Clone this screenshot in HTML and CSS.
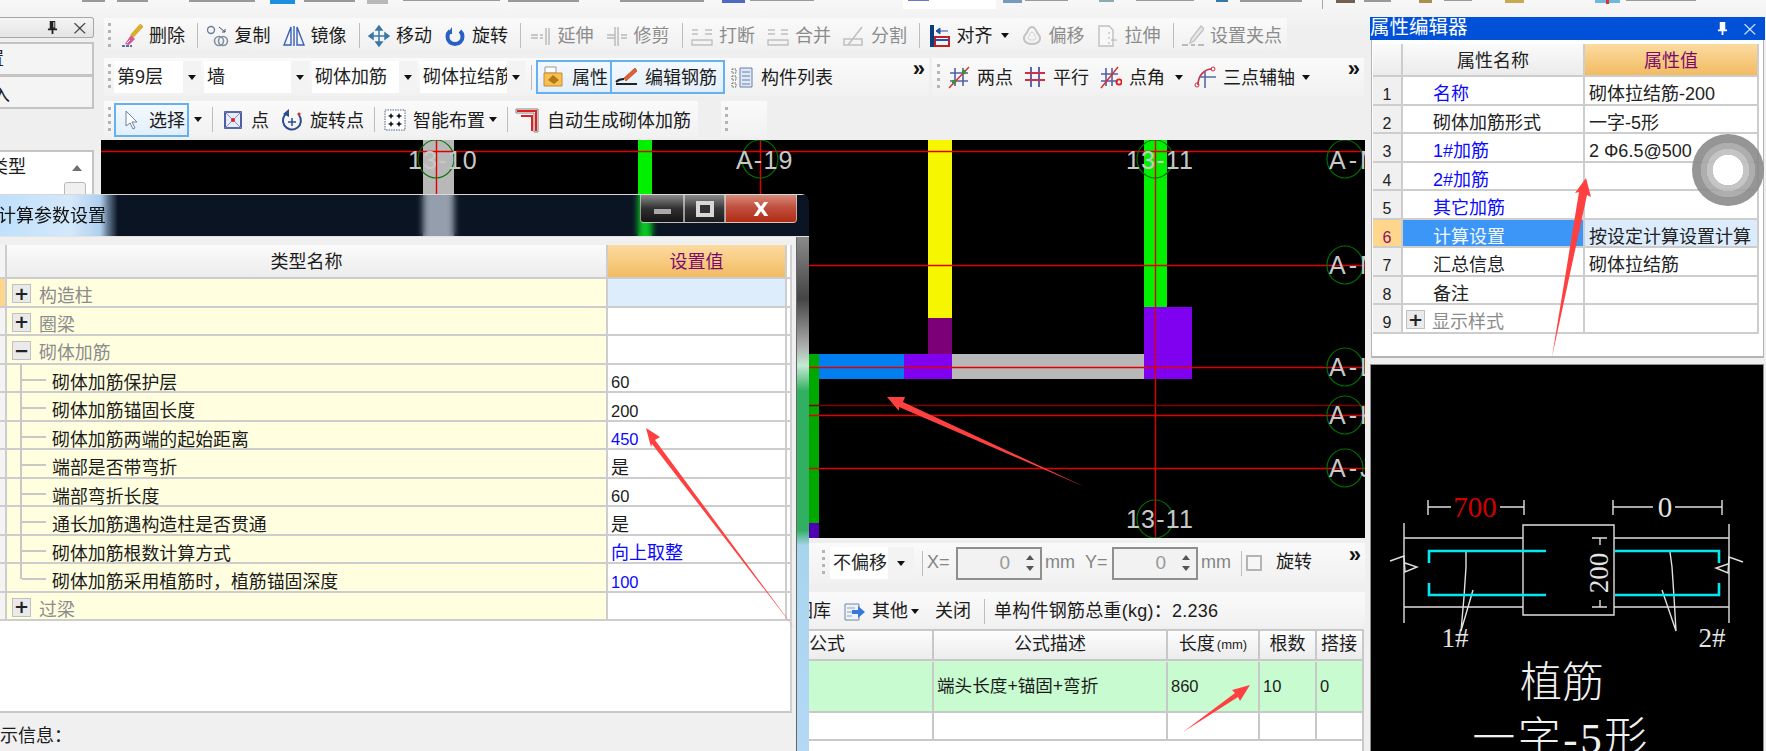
FILE: index.html
```html
<!DOCTYPE html>
<html lang="zh-CN">
<head>
<meta charset="utf-8">
<title>砌体加筋</title>
<link rel="stylesheet" href="styles.css">
</head>
<body>
<div class="app">
  <svg class="topstrip" viewBox="0 0 1766 17" aria-hidden="true">
    <g class="frag">
      <rect x="82" y="0" width="23" height="2"/><rect x="117" y="0" width="31" height="2"/><rect x="189" y="0" width="66" height="2"/>
      <rect x="304" y="0" width="51" height="2"/><rect x="403" y="0" width="97" height="1"/><rect x="508" y="0" width="71" height="2"/>
      <rect x="620" y="0" width="84" height="2"/><rect x="750" y="0" width="50" height="1"/><rect x="800" y="0" width="14" height="1"/>
      <rect x="1025" y="0" width="43" height="1"/><rect x="1136" y="0" width="58" height="1"/><rect x="1240" y="0" width="62" height="2"/>
      <rect x="1364" y="0" width="27" height="2"/><rect x="1444" y="0" width="28" height="1"/><rect x="1626" y="0" width="70" height="1"/>
    </g>
    <rect x="270" y="0" width="25" height="4" fill="#1c8fe0"/>
    <rect x="367" y="0" width="21" height="4" fill="#b8b8b8"/>
    <rect x="722" y="0" width="23" height="3" fill="#5068c0"/>
    <rect x="903" y="0" width="93" height="9" fill="#fff"/>
    <rect x="908" y="0" width="21" height="1" fill="#6878c8"/>
    <rect x="1003" y="0" width="19" height="3" fill="#7898c0"/>
    <rect x="1099" y="0" width="15" height="2" fill="#90a8b0"/>
    <rect x="1216" y="0" width="12" height="2" fill="#3878a8"/>
    <rect x="1322" y="0" width="1" height="9" fill="#a8a8a8"/>
    <rect x="1336" y="0" width="19" height="3" fill="#706050"/>
    <rect x="1419" y="0" width="13" height="3" fill="#a89050"/>
    <rect x="1505" y="0" width="19" height="3" fill="#c8a850"/>
    <rect x="1595" y="0" width="25" height="3" fill="#70b8e0"/>
    <rect x="1606" y="0" width="3" height="4" fill="#e03030"/>
  </svg>

  <div class="workspace">
    <aside class="left">
      <div class="left-head">
        <svg class="pin" viewBox="0 0 12 16"><path d="M3 1h6v8H3zM1 9h10v2H1zM5 11h2v4H5z" fill="#222"/><path d="M7 2h1v6H7z" fill="#fff"/></svg>
        <span class="closex">×</span>
      </div>
      <div class="left-tab left-tab-a"><span class="clip-a">置</span></div>
      <div class="left-tab left-tab-b"><span class="clip-b">入</span></div>
      <div class="left-list">
        <span class="clip-c">类型</span>
        <span class="scroll-up"></span>
        <span class="scroll-thumb"></span>
      </div>
    </aside>

    <main class="center">
      <div class="tb tb1">
        <span class="grip"></span>
        <span class="tool">
          <svg class="ic" viewBox="0 0 22 24"><path d="M1 22h10" stroke="#22408a" stroke-width="1.6" stroke-dasharray="3 1"/><path d="M21 1L11 12" stroke="#d8b030" stroke-width="4.5"/><path d="M10 11l4 4-6 6-4-1z" fill="#d85890"/><path d="M6 19l3-3" stroke="#fff"/></svg>
          <span>删除</span></span>
        <span class="sep"></span>
        <span class="tool">
          <svg class="ic" viewBox="0 0 22 24"><circle cx="4" cy="6" r="3.5" fill="none" stroke="#6880a0" stroke-width="1.4"/><path d="M12 3l6 5m0-3v3h-3" stroke="#405070" fill="none"/><circle cx="12" cy="17" r="4.5" fill="none" stroke="#8090a0" stroke-width="1.6"/><circle cx="16" cy="17" r="4.5" fill="none" stroke="#8090a0" stroke-width="1.6"/></svg>
          <span>复制</span></span>
        <span class="tool">
          <svg class="ic" viewBox="0 0 22 24"><path d="M8 3L1 21h7zM14 3l7 18h-7zM11 2v20" fill="none" stroke="#3860b8" stroke-width="1.4"/></svg>
          <span>镜像</span></span>
        <span class="sep"></span>
        <span class="tool">
          <svg class="ic" viewBox="0 0 22 24"><path d="M11 2v20M2 12h18M11 2L8 6h6zM11 22l-3-4h6zM1 12l4-3v6zM21 12l-4-3v6z" fill="#3a78a8" stroke="#3a78a8" stroke-width="1.5"/></svg>
          <span>移动</span></span>
        <span class="tool">
          <svg class="ic" viewBox="0 0 22 24"><path d="M6 7a7.5 7.5 0 1 0 10 0" fill="none" stroke="#2860c8" stroke-width="4"/><path d="M8 3v7H3z" fill="#2860c8"/></svg>
          <span>旋转</span></span>
        <span class="sep"></span>
        <span class="tool off">
          <svg class="ic" viewBox="0 0 22 24"><path d="M1 11h7M1 14h7M10 11h3M10 14h3M16 4v17M19 4v17" stroke="#b8b8b8" fill="none" stroke-width="1.4"/></svg>
          <span>延伸</span></span>
        <span class="tool off">
          <svg class="ic" viewBox="0 0 22 24"><path d="M1 11h8M1 14h8M15 11h6M15 14h6M9 3v19M12 3v19" stroke="#b8b8b8" fill="none" stroke-width="1.4"/></svg>
          <span>修剪</span></span>
        <span class="sep"></span>
        <span class="tool off">
          <svg class="ic" viewBox="0 0 22 24"><path d="M1 6h6M1 10h6M14 6h7M14 10h7M1 16h20v5H1z" stroke="#c0c0c0" fill="none" stroke-width="1.4"/></svg>
          <span>打断</span></span>
        <span class="tool off">
          <svg class="ic" viewBox="0 0 22 24"><path d="M1 6h7M1 10h7M14 6h7M14 10h7M1 16h20v5H1z" stroke="#c0c0c0" fill="none" stroke-width="1.4"/></svg>
          <span>合并</span></span>
        <span class="tool off">
          <svg class="ic" viewBox="0 0 22 24"><path d="M1 15h18v6H1zM5 21l14-18" stroke="#c0c0c0" fill="none" stroke-width="1.6"/></svg>
          <span>分割</span></span>
        <span class="sep"></span>
        <span class="tool">
          <svg class="ic" viewBox="0 0 22 24"><path d="M3 1v22" stroke="#0c3c80" stroke-width="4"/><path d="M6 13h14v9H6z" fill="none" stroke="#c02020" stroke-width="2"/><path d="M6 16h14" stroke="#2050c0" stroke-width="2"/><path d="M7 7h12M7 7l4-3v6z" stroke="#2050b0" fill="#2050b0"/></svg>
          <span>对齐</span><i class="caret caret-al"></i></span>
        <span class="tool off">
          <svg class="ic" viewBox="0 0 22 24"><path d="M11 3c4 0 4 5 6 7 4 4 2 10-6 10s-10-6-6-10c2-2 2-7 6-7z" fill="none" stroke="#c4c4c4" stroke-width="2"/><path d="M11 8c2 0 2 3 3 4 2 2 1 4-3 4s-5-2-3-4c1-1 1-4 3-4z" fill="none" stroke="#d0d0d0"/></svg>
          <span>偏移</span></span>
        <span class="tool off">
          <svg class="ic" viewBox="0 0 22 24"><path d="M2 2h10l4 4v16H2z" fill="#f8f8f8" stroke="#c0c0c0" stroke-width="1.4"/><path d="M12 8v2m0 3v2m0 3v2M14 16h6" stroke="#b0b0b0"/></svg>
          <span>拉伸</span></span>
        <span class="sep"></span>
        <span class="tool off">
          <svg class="ic" viewBox="0 0 22 24"><path d="M19 2L9 15l-1 4 4-2 10-12z" fill="#e8e8e8" stroke="#c0c0c0" stroke-width="1.3"/><path d="M0 21h6M9 21h4M16 21h6" stroke="#a8a8a8" stroke-width="1.5"/></svg>
          <span>设置夹点</span></span>
      </div>

      <div class="tb-row tb-row2">
        <div class="tb tb2a">
          <span class="grip"></span>
          <div class="combos">
            <span class="combo combo-s"><span class="combo-t">第9层</span><span class="combo-b"><i class="caret"></i></span></span>
            <span class="combo"><span class="combo-t">墙</span><span class="combo-b"><i class="caret"></i></span></span>
            <span class="combo"><span class="combo-t">砌体加筋</span><span class="combo-b"><i class="caret"></i></span></span>
            <span class="combo"><span class="combo-t">砌体拉结筋</span><span class="combo-b"><i class="caret"></i></span></span>
          </div>
          <span class="sep sep-r2"></span>
          <span class="btn btn-attr">
            <svg class="ic" viewBox="0 0 22 24"><path d="M3 2h11v6H3z" fill="#fff" stroke="#999"/><path d="M2 8h18v13H2z" fill="#f8c050" stroke="#c88830"/><path d="M6 15l5-5 6 5-5 4z" fill="#b07818"/></svg>
            <span>属性</span></span>
          <span class="btn btn-edit">
            <svg class="ic" viewBox="0 0 22 24"><path d="M20 3L9 13l2 3L22 6z" fill="#e06030" stroke="#a03818" stroke-width=".6"/><path d="M1 17c3-3 6-3 8-3M1 19h21" stroke="#222" stroke-width="2" fill="none"/></svg>
            <span>编辑钢筋</span></span>
          <span class="tool tool-list">
            <svg class="ic" viewBox="0 0 22 24"><path d="M1 4h4v4H1zM1 11h4v4H1zM1 18h4v4H1z" fill="none" stroke="#606060" stroke-dasharray="1.5 1"/><path d="M9 3h12v19H9z" fill="#dfe8f4" stroke="#6880a8"/><path d="M11 7h8M11 11h8M11 15h8M11 19h8" stroke="#6880a8"/></svg>
            <span>构件列表</span></span>
          <span class="more">»</span>
        </div>
        <div class="tb tb2b">
          <span class="grip"></span>
          <span class="tool">
            <svg class="ic" viewBox="0 0 22 24"><path d="M7 3v18M15 3v18M2 8h18M2 16h18" stroke="#5060a8" stroke-width="1.6" fill="none"/><path d="M1 23L21 2" stroke="#e02828" stroke-width="1.4"/><circle cx="6" cy="17" r="2.2" fill="#409030"/><circle cx="16" cy="7" r="2.2" fill="#409030"/></svg>
            <span>两点</span></span>
          <span class="tool">
            <svg class="ic" viewBox="0 0 22 24"><path d="M7 2v20M15 2v20" stroke="#4858a8" stroke-width="1.8"/><path d="M1 8h20M1 15h20" stroke="#d03040" stroke-width="1.8"/></svg>
            <span>平行</span></span>
          <span class="tool">
            <svg class="ic" viewBox="0 0 22 24"><path d="M6 3v18M12 3v18M1 9h17M1 16h17" stroke="#5060a8" stroke-width="1.6" fill="none"/><path d="M1 23L18 2" stroke="#e02828" stroke-width="1.4"/><circle cx="19" cy="17" r="2.6" fill="none" stroke="#e02020" stroke-width="1.8"/></svg>
            <span>点角</span><i class="caret caret-r2"></i></span>
          <span class="tool">
            <svg class="ic" viewBox="0 0 22 24"><path d="M4 20C4 11 10 4 18 4" stroke="#d03040" stroke-width="1.6" fill="none"/><circle cx="19" cy="4" r="2" fill="none" stroke="#d03040"/><circle cx="3" cy="20" r="2" fill="none" stroke="#d03040"/><path d="M11 6v17M5 12h17" stroke="#5868a8" stroke-width="1.6"/></svg>
            <span>三点辅轴</span><i class="caret"></i></span>
          <span class="more">»</span>
        </div>
      </div>

      <div class="tb-row tb-row3">
        <div class="tb tb3">
          <span class="grip"></span>
          <span class="btn btn-select">
            <svg class="ic-cursor" viewBox="0 0 14 22"><path d="M2 2v15l4-3 3 6 2-1-3-6h5z" fill="#fff" stroke="#7080a0"/></svg>
            <span>选择</span></span>
          <i class="caret caret-sel"></i>
          <span class="sep sep-r3"></span>
          <span class="tool">
            <svg class="ic" viewBox="0 0 22 24"><path d="M3 4h16v16H3z" fill="#e8ecf8" stroke="#283890" stroke-width="1.6"/><path d="M3 4l16 16M19 4L3 20" stroke="#8090c8"/><circle cx="11" cy="12" r="2" fill="#e02020"/></svg>
            <span>点</span></span>
          <span class="tool">
            <svg class="ic" viewBox="0 0 22 24"><path d="M6 5a9 9 0 1 0 12 2" fill="none" stroke="#2c4c90" stroke-width="2"/><path d="M8 1v8L2 6z" fill="#2c4c90"/><path d="M11 10v8M7 14h8" stroke="#2c4c90" stroke-width="1.5"/><circle cx="18" cy="6" r="1.6" fill="#d03030"/></svg>
            <span>旋转点</span></span>
          <span class="sep sep-r3b"></span>
          <span class="tool">
            <svg class="ic" viewBox="0 0 22 24"><path d="M1 2h20v20H1z" fill="#fff" stroke="#506080" stroke-dasharray="1.5 1"/><path d="M7 5l1 2 2 1-2 1-1 2-1-2-2-1 2-1zM15 5l1 2 2 1-2 1-1 2-1-2-2-1 2-1zM7 13l1 2 2 1-2 1-1 2-1-2-2-1 2-1zM15 13l1 2 2 1-2 1-1 2-1-2-2-1 2-1z" fill="#101828"/></svg>
            <span>智能布置</span><i class="caret caret-tight"></i></span>
          <span class="sep sep-r3c"></span>
          <span class="tool tool-auto">
            <svg class="ic ic-wide" viewBox="0 0 24 26"><path d="M1 2h22v23h-4V6H1z" fill="#fff" stroke="#808080"/><path d="M2 4h19v20" fill="none" stroke="#e02020" stroke-width="2"/><path d="M6 9h11v15" fill="none" stroke="#e02020" stroke-width="2"/></svg>
            <span>自动生成砌体加筋</span></span>
        </div>
        <div class="tb tb3b"><span class="grip"></span></div>
      </div>

      <svg class="cad" viewBox="101 140 1264 398">
        <rect x="101" y="140" width="1264" height="398" fill="#000"/>
        <rect x="423" y="140" width="31" height="100" fill="#b8b8b8"/>
        <rect x="638" y="140" width="14" height="100" fill="#00f000"/>
        <rect x="928" y="140" width="24" height="178" fill="#f6f600"/>
        <rect x="928" y="318" width="24" height="37" fill="#7c0078"/>
        <rect x="1144" y="140" width="23" height="167" fill="#00f000"/>
        <rect x="809" y="354" width="10" height="170" fill="#00a800"/>
        <rect x="809" y="523" width="10" height="15" fill="#5000b0"/>
        <rect x="819" y="354" width="85" height="25" fill="#0080f0"/>
        <rect x="904" y="354" width="48" height="25" fill="#8000f0"/>
        <rect x="952" y="354" width="192" height="25" fill="#b8b8b8"/>
        <rect x="1144" y="307" width="48" height="72" fill="#8000f0"/>
        <g class="redlines">
          <path d="M101 151.5H1365M101 265.5H1365M101 367.5H1365M101 415.5H1365M101 468.5H1365M436.5 140V194M760.5 140V194M1155.5 140V538"/>
        </g>
        <path d="M101 405.5H1365" stroke="#800000" stroke-width="1.4"/>
        <g class="axis-c">
          <ellipse cx="436" cy="159" rx="18" ry="19"/><ellipse cx="760" cy="159" rx="18" ry="19"/><ellipse cx="1155" cy="159" rx="18" ry="19"/><ellipse cx="1155" cy="519" rx="18" ry="19"/>
          <ellipse cx="1345" cy="159" rx="18" ry="19"/><ellipse cx="1345" cy="265" rx="18" ry="19"/><ellipse cx="1345" cy="367" rx="18" ry="19"/><ellipse cx="1345" cy="415" rx="18" ry="19"/><ellipse cx="1345" cy="468" rx="18" ry="19"/>
        </g>
        <g class="axis-t">
          <text x="408" y="169">13-10</text><text x="736" y="169">A-19</text><text x="1126" y="169">13-11</text><text x="1126" y="528">13-11</text>
        </g>
        <g class="axis-t axis-a">
          <text x="1329" y="169">A-M</text><text x="1329" y="274">A-M</text><text x="1329" y="376">A-L</text><text x="1329" y="424">A-K</text><text x="1329" y="477">A-J</text>
        </g>
      </svg>

      <div class="tb tb4">
        <span class="grip"></span>
        <span class="combo combo-off"><span class="combo-t">不偏移</span><span class="combo-b"><i class="caret"></i></span></span>
        <span class="sep sep-a"></span>
        <span class="dis lbl-x">X=</span>
        <span class="spin"><span class="spin-v">0</span><span class="spin-b"><i class="up"></i><i class="down"></i></span></span>
        <span class="dis lbl-mm">mm</span>
        <span class="dis lbl-y">Y=</span>
        <span class="spin"><span class="spin-v">0</span><span class="spin-b"><i class="up"></i><i class="down"></i></span></span>
        <span class="dis lbl-mm">mm</span>
        <span class="sep sep-b"></span>
        <span class="check"></span>
        <span class="rot">旋转</span>
        <span class="more">»</span>
      </div>
      <div class="tb tb5">
        <span class="lib">钢筋图库</span>
        <svg class="ic ic-other" viewBox="0 0 22 24"><path d="M2 4h14v16H2z" fill="#eef3fa" stroke="#7088a8"/><path d="M4 8h8M4 12h5M4 16h5" stroke="#90a0b8"/><path d="M9 10h6V6l7 6-7 6v-4H9z" fill="#3878d8"/></svg>
        <span class="oth">其他</span><i class="caret caret-oth"></i>
        <span class="close-t">关闭</span>
        <span class="sep sep-c"></span>
        <span class="total">单构件钢筋总重(kg)：2.236</span>
      </div>
      <div class="bars">
        <div class="bars-row bars-head">
          <div class="bc bc-first">公式</div><div class="bc bc-center">公式描述</div><div class="bc bc-center">长度<small>(mm)</small></div><div class="bc bc-center">根数</div><div class="bc bc-center">搭接</div>
        </div>
        <div class="bars-row bars-sel">
          <div class="bc"></div><div class="bc bc-wide">端头长度+锚固+弯折</div><div class="bc">860</div><div class="bc">10</div><div class="bc">0</div>
        </div>
        <div class="bars-row bars-empty">
          <div class="bc"></div><div class="bc"></div><div class="bc"></div><div class="bc"></div><div class="bc"></div>
        </div>
      </div>
    </main>

    <aside class="right">
      <div class="pe-title"><span>属性编辑器</span>
        <span class="pe-icons">
          <svg class="pin pin-w" viewBox="0 0 12 16"><path d="M3 1h6v8H3zM1 9h10v2H1zM5 11h2v4H5z" fill="#fff"/></svg>
          <span class="closex closex-w">×</span>
        </span>
      </div>
      <div class="pe-body">
        <div class="pe-row pe-head"><div class="pc pc-no"></div><div class="pc pc-mid">属性名称</div><div class="pc pc-valh">属性值</div></div>
        <div class="pe-row"><div class="pc pc-no">1</div><div class="pc pc-name blue">名称</div><div class="pc">砌体拉结筋-200</div></div>
        <div class="pe-row"><div class="pc pc-no">2</div><div class="pc pc-name">砌体加筋形式</div><div class="pc">一字-5形</div></div>
        <div class="pe-row"><div class="pc pc-no">3</div><div class="pc pc-name blue">1#加筋</div><div class="pc">2 Φ6.5@500</div></div>
        <div class="pe-row"><div class="pc pc-no">4</div><div class="pc pc-name blue">2#加筋</div><div class="pc"></div></div>
        <div class="pe-row"><div class="pc pc-no">5</div><div class="pc pc-name blue">其它加筋</div><div class="pc"></div></div>
        <div class="pe-row pe-sel"><div class="pc pc-no">6</div><div class="pc pc-name">计算设置</div><div class="pc">按设定计算设置计算</div></div>
        <div class="pe-row"><div class="pc pc-no">7</div><div class="pc pc-name">汇总信息</div><div class="pc">砌体拉结筋</div></div>
        <div class="pe-row"><div class="pc pc-no">8</div><div class="pc pc-name">备注</div><div class="pc"></div></div>
        <div class="pe-row"><div class="pc pc-no">9</div><div class="pc pc-group"><span class="exp">+</span><span class="grey">显示样式</span></div><div class="pc"></div></div>
      </div>
      <svg class="drawing" viewBox="1371 365 392 386">
        <rect x="1371" y="365" width="392" height="386" fill="#000"/>
        <g class="dw">
          <path d="M1428 500v15M1524 500v15M1428 507h23M1500 507h24M1613 500v15M1722 500v15M1613 507h40M1675 507h47"/>
          <path d="M1404 523v100M1729 524v99M1404 538h119M1404 607h119M1614 538h115M1614 607h115"/>
          <path d="M1523 525h91v90h-91z"/>
          <path d="M1390 561l14-5 1 16 12-5-12-4M1743 562l-14-5-1 16-12-5 12-4"/>
          <path d="M1466 552v15l-2 30-3 34 12-41M1670 552l2 15 2 30 2 34-14-41"/>
          <path d="M1592 538h15M1592 607h15M1600 538v7M1600 600v7"/>
        </g>
        <g class="cy">
          <path d="M1429 563v-12h117M1429 583v12h117M1719 563v-12h-104M1719 583v12h-104"/>
        </g>
        <text class="dim-red" x="1475" y="517">700</text>
        <text class="dim-w" x="1665" y="517">0</text>
        <text class="dim-w dim-r" x="1608" y="573" transform="rotate(-90 1608 573)">200</text>
        <text class="dim-n" x="1455" y="647">1#</text>
        <text class="dim-n" x="1712" y="647">2#</text>
        <text class="big" x="1562" y="697">植筋</text>
        <text class="big big-2" x="1561" y="753">一字-5形</text>
      </svg>
    </aside>
  </div>

  <section class="dialog">
    <header class="dlg-title">
      <span class="dlg-glow"></span>
      <span class="dlg-name">计算参数设置</span>
      <span class="dlg-ctrls">
        <span class="wb wb-min"><i></i></span>
        <span class="wb wb-max"><i></i></span>
        <span class="wb wb-close">X</span>
      </span>
    </header>
    <div class="dlg-lower">
      <div class="dlg-main">
        <div class="dt">
          <div class="dt-row dt-head"><div class="dc"></div><div class="dc dc-h">类型名称</div><div class="dc dc-vh">设置值</div></div>
          <div class="dt-row dt-first"><div class="dc dc-g"></div><div class="dc dc-n"><span class="exp">+</span><span class="grey">构造柱</span></div><div class="dc dc-v"></div></div>
          <div class="dt-row"><div class="dc dc-g"></div><div class="dc dc-n"><span class="exp">+</span><span class="grey">圈梁</span></div><div class="dc dc-v"></div></div>
          <div class="dt-row"><div class="dc dc-g"></div><div class="dc dc-n"><span class="exp">−</span><span class="grey">砌体加筋</span></div><div class="dc dc-v"></div></div>
          <div class="dt-row"><div class="dc dc-g"></div><div class="dc dc-n dc-child">砌体加筋保护层</div><div class="dc dc-v">60</div></div>
          <div class="dt-row"><div class="dc dc-g"></div><div class="dc dc-n dc-child">砌体加筋锚固长度</div><div class="dc dc-v">200</div></div>
          <div class="dt-row"><div class="dc dc-g"></div><div class="dc dc-n dc-child">砌体加筋两端的起始距离</div><div class="dc dc-v blue">450</div></div>
          <div class="dt-row"><div class="dc dc-g"></div><div class="dc dc-n dc-child">端部是否带弯折</div><div class="dc dc-v dc-wide">是</div></div>
          <div class="dt-row"><div class="dc dc-g"></div><div class="dc dc-n dc-child">端部弯折长度</div><div class="dc dc-v">60</div></div>
          <div class="dt-row"><div class="dc dc-g"></div><div class="dc dc-n dc-child">通长加筋遇构造柱是否贯通</div><div class="dc dc-v dc-wide">是</div></div>
          <div class="dt-row"><div class="dc dc-g"></div><div class="dc dc-n dc-child">砌体加筋根数计算方式</div><div class="dc dc-v dc-wide blue">向上取整</div></div>
          <div class="dt-row"><div class="dc dc-g"></div><div class="dc dc-n dc-child dc-last">砌体加筋采用植筋时，植筋锚固深度</div><div class="dc dc-v blue">100</div></div>
          <div class="dt-row"><div class="dc dc-g"></div><div class="dc dc-n"><span class="exp">+</span><span class="grey">过梁</span></div><div class="dc dc-v"></div></div>
        </div>
        <div class="dlg-info">提示信息：</div>
      </div>
      <div class="dlg-bezel"></div>
    </div>
  </section>

  <div class="ring"></div>

  <svg class="arrows" viewBox="0 0 1766 751" aria-hidden="true">
    <path d="M646 428L660 437 655 440 795 629 652 444 651 447z"/>
    <path d="M887 397L905 397 903 402 1085 487 899 407 899 411z"/>
    <path d="M1586 178L1591 197 1587 195 1552 357 1579 192 1575 193z"/>
    <path d="M1250 685L1240 701 1238 697 1183 732 1235 693 1232 690z"/>
  </svg>
</div>
</body>
</html>
```
FILE: styles.css
```css
* { box-sizing: border-box; }
html, body { margin: 0; padding: 0; }
body { width: 1766px; height: 751px; overflow: hidden; background: #f0f0f0; }
.app {
  position: relative; width: 1766px; height: 751px; overflow: hidden;
  background: linear-gradient(#f7f7f7, #efefef 30px);
  font: 18px/1.2 "Liberation Sans", "Noto Sans CJK SC", sans-serif;
  color: #1c1c1c; filter: blur(.45px);
}
.topstrip { display: block; width: 1766px; height: 17px; }
.frag rect { fill: #9a9a9a; }
.workspace { display: flex; height: 734px; }

/* left dock */
.left { width: 94px; flex: none; display: flex; flex-direction: column; }
.left-head {
  height: 21px; display: flex; align-items: center; justify-content: flex-end; gap: 13px; padding-right: 4px;
  background: linear-gradient(#f4f4f4, #e4e4e4); border: 1px solid #a8a8a8; border-left: 0; border-radius: 0 3px 3px 0;
}
.pin { width: 11px; height: 15px; }
.closex { font-size: 22px; line-height: 18px; color: #333; font-family: "DejaVu Sans", sans-serif; font-weight: 300; }
.left-tab { background: #f4f4f4; border: 2px solid #c4c4c4; border-left: 0; overflow: hidden; white-space: nowrap; }
.left-tab-a { height: 33px; margin-top: 4px; border-bottom-width: 1px; line-height: 30px; }
.left-tab-b { height: 34px; line-height: 36px; }
.clip-a { margin-left: -14px; display: inline-block; }
.clip-b { margin-left: -8px; display: inline-block; }
.left-list { position: relative; margin-top: 41px; height: 60px; background: #fff; border: 2px solid #c4c4c4; border-left: 0; overflow: hidden; }
.clip-c { position: absolute; left: -10px; top: 5px; font-size: 18px; white-space: nowrap; }
.scroll-up { position: absolute; left: 72px; top: 13px; border: 5px solid transparent; border-bottom: 6px solid #707070; border-top: 0; }
.scroll-thumb { position: absolute; left: 64px; top: 30px; width: 22px; height: 30px; background: #f0f0f0; border: 1px solid #b8b8b8; border-radius: 3px; }

/* center */
.center { width: 1264px; flex: none; margin-left: 7px; display: flex; flex-direction: column; }
.tb { display: flex; align-items: center; background: linear-gradient(#fafafa, #f1f1f1); white-space: nowrap; }
.tb-row { display: flex; }
.tb1 { margin: 1px 0 0 3px; width: 1183px; height: 31px; padding: 4px 0 0 4px; }
.tb-row2 { margin: 9px 0 0 3px; height: 38px; gap: 3px; }
.tb-row3 { margin: 5px 0 0 3px; height: 37px; gap: 23px; }
.tb2a { width: 825px; padding-left: 4px; padding-right: 4px; }
.tb2b { width: 432px; padding-left: 5px; padding-right: 4px; }
.tb3 { width: 594px; padding-left: 4px; }
.tb3b { width: 46px; padding-left: 4px; }
.grip { width: 3px; height: 26px; flex: none; margin-right: 10px; background: repeating-linear-gradient(#b4b4b4 0 3px, transparent 3px 7px); }
.tool { display: flex; align-items: center; gap: 6px; margin-right: 12px; flex: none; }
.tool > span, .btn > span { padding-top: 4px; }
.tb1 .tool > span { padding-top: 3px; }
.tool.off { color: #8c8c8c; }
.ic { width: 22px; height: 24px; flex: none; }
.ic-wide { width: 24px; height: 26px; }
.sep { width: 1px; height: 25px; background: #bdbdbd; flex: none; margin: 0 8.5px 0 0; }
.caret { display: inline-block; width: 0; height: 0; border: 4px solid transparent; border-top: 5px solid #111; border-bottom: 0; flex: none; }
.caret-al { margin-left: 2px; }
.more { font-size: 22px; font-weight: 700; line-height: 14px; margin: -16px 0 0 auto; color: #111; flex: none; }

.tb2a .grip { margin-right: 3px; }
.combos { display: flex; gap: 3px; }
.combo { width: 105px; height: 32px; display: flex; background: #fff; flex: none; }
.combo-s { width: 87px; }
.combo-t { flex: 1; min-width: 0; overflow: hidden; padding: 6px 0 0 3px; color: #222; white-space: nowrap; }
.combo-b { width: 18px; flex: none; background: #f3f3f3; display: flex; align-items: center; justify-content: center; }
.sep-r2 { margin: 0 4px 0 6px; }
.btn { display: flex; align-items: center; height: 34px; border: 2px solid #64b0f0; background: linear-gradient(#f4f9fe, #e2effb); flex: none; }
.btn-attr { width: 76px; padding-left: 4px; gap: 8px; }
.btn-edit { width: 113px; padding-left: 3px; gap: 8px; border-left-width: 0; }
.tool-list { margin-left: 6px; gap: 8px; }
.tb2b .grip { margin-right: 8px; }
.tb2b .tool { gap: 7px; margin-right: 11px; }
.caret-r2 { margin-left: 3px; }

.tb3 .grip { margin-right: 3px; }
.btn-select { width: 75px; padding-left: 8px; gap: 11px; }
.ic-cursor { width: 14px; height: 22px; flex: none; }
.caret-sel { margin: 0 10px 0 5px; }
.sep-r3 { margin-right: 9px; }
.tb3 .tool { gap: 7px; margin-right: 12px; }
.sep-r3b { margin: 0 9px 0 -2px; }
.caret-tight { margin-left: -3px; }
.tb3 .tool.tool-auto { gap: 8px; margin-right: 0; }
.sep-r3c { margin: 0 7px 0 -2px; }

.cad { display: block; width: 1264px; height: 398px; margin-top: 2px; flex: none; }
.redlines path { stroke: #e00000; stroke-width: 1.4; fill: none; }
.axis-c ellipse { fill: none; stroke: #007000; stroke-width: 1.2; }
.axis-t text { font: 25px "Liberation Sans", sans-serif; fill: #c8c8c8; letter-spacing: 1.2px; }
.axis-a text { letter-spacing: 3px; }

.tb4 { margin-top: 5px; height: 40px; padding: 0 4px 0 721px; flex: none; }
.tb4 .grip { margin-right: 5px; }
.combo-off { width: 84px; height: 32px; }
.combo-off .combo-b { width: 26px; }
.dis { color: #858585; flex: none; }
.sep-a { margin: 0 4px 0 8px; }
.lbl-x { width: 29px; }
.spin { width: 86px; height: 33px; display: flex; background: #f2f2f2; border: 2px solid #8f8f8f; flex: none; }
.spin-v { flex: 1; text-align: right; padding: 3px 10px 0 0; color: #999; font-size: 19px; }
.spin-b { width: 20px; display: flex; flex-direction: column; justify-content: space-around; align-items: center; padding: 4px 0; }
.up { width: 0; height: 0; border: 4px solid transparent; border-bottom: 5px solid #555; border-top: 0; }
.down { width: 0; height: 0; border: 4px solid transparent; border-top: 5px solid #555; border-bottom: 0; }
.lbl-mm { margin-left: 3px; width: 32px; }
.lbl-y { margin: 0 5px 0 8px; width: 22px; }
.sep-b { margin: 0 4px 0 8px; }
.check { width: 16px; height: 16px; border: 2px solid #b4b4b4; background: #f6f6f6; margin-right: 14px; flex: none; }
.rot { flex: none; }

.tb5 { margin-top: 9px; height: 35px; padding: 4px 0 0 658px; flex: none; }
.lib { margin-right: 12px; }
.ic-other { margin-right: 7px; }
.caret-oth { margin: 0 16px 0 3px; }
.close-t { margin-right: 13px; }
.sep-c { margin: 0 9px 0 0; }
.total { letter-spacing: .25px; }

.bars { margin-top: 2px; flex: 1; background: #fff; border-top: 2px solid #c8c8c8; border-right: 2px solid #c8c8c8; margin-right: 1px; font-size: 16.5px; }
.bars-row { display: grid; grid-template-columns: 833px 234px 92px 57px 44px; border-bottom: 2px solid #c8c8c8; }
.bc { border-right: 2px solid #c8c8c8; padding: 0 3px; display: flex; align-items: center; overflow: hidden; white-space: nowrap; }
.bc:last-child { border-right: 0; }
.bc-wide { font-size: 17.6px; }
.bars-head { height: 30px; background: linear-gradient(#fdfdfd, #ececec); font-size: 18px; }
.bc-first { padding-left: 708px; }
.bc-center { justify-content: center; }
.bc small { font-size: 13px; margin-left: 2px; }
.bars-sel { height: 52px; background: #c8fbd0; padding-top: 1px; }
.bars-empty { height: 28px; }

/* right dock */
.right { width: 396px; flex: none; margin-left: 5px; display: flex; flex-direction: column; }
.pe-title {
  height: 23px; background: #0050d8; color: #fff; font-size: 19.5px; line-height: 21px; display: flex; justify-content: space-between;
  margin-right: 1px; padding-right: 6px;
}
.pe-icons { display: flex; align-items: center; gap: 13px; }
.closex-w { color: #dde6ff; }
.pe-body {
  margin: 0 2px 0 1px; height: 318px; background: #fff; border: 1px solid #b4b4b4; border-width: 0 1px 2px 1px;
  padding: 4px 4px 0 1px;
}
.pe-row { display: grid; grid-template-columns: 30px 182px 174px; height: 28.5px; border-bottom: 2px solid #cdcdcd; }
.pc { display: flex; align-items: center; padding: 9px 0 0 4px; line-height: 17px; border-right: 2px solid #cdcdcd; overflow: hidden; white-space: nowrap; color: #222; }
.pc-no { justify-content: center; padding: 9px 0 0; background: #f0f0f0; font-size: 16px; }
.pc-name { padding-left: 30px; background: #fff; }
.pc-group { padding: 0 0 0 3px; gap: 7px; }
.pc-group .grey { padding-top: 8px; }
.pc-group .exp { margin-top: 3px; }
.pc-mid { justify-content: center; padding: 4px 0 0; background: linear-gradient(#fbfbfb, #ebebeb); }
.pc-valh { justify-content: center; padding: 4px 0 0; background: linear-gradient(#fcdba0, #f2bb62); color: #7a0a70; }
.pe-head { height: 33px; }
.pe-head .pc-no { background: linear-gradient(#fbfbfb, #ebebeb); }
.blue { color: #0a0aff !important; }
.grey { color: #8c8c8c; }
.pe-sel .pc-no { background: #ffd68c; color: #8a1060; }
.pe-sel .pc-name { background: #3c96f8; color: #f4f8ff; }
.pe-sel .pc:last-child { background: #dcecfc; }
.exp {
  width: 19px; height: 19px; flex: none; display: flex; align-items: center; justify-content: center;
  background: #eaeaea; border: 1px solid #c0c0c0; font: 700 18px/1 "DejaVu Sans", sans-serif; color: #222;
}
.drawing { display: block; width: 392px; height: 386px; margin: 7px 0 0 1px; flex: none; outline: 1px solid #909090; }
.dw path { fill: none; stroke: #e0e0e0; stroke-width: 1.4; }
.cy path { fill: none; stroke: #00e8f0; stroke-width: 2.6; }
.dim-red, .dim-w { font: 29px "Liberation Serif", serif; text-anchor: middle; }
.dim-red { fill: #d00000; }
.dim-w { fill: #e4e4e4; }
.dim-r { font-size: 27px; }
.dim-n { font: 27px "Liberation Serif", serif; fill: #e4e4e4; text-anchor: middle; }
.big { font: 300 42px "Liberation Serif", "Noto Sans CJK SC", serif; fill: #f0f0f0; text-anchor: middle; }
.big-2 { font-size: 43px; letter-spacing: 2.5px; }

/* dialog (window over the workspace) */
.dialog { position: absolute; left: 0; top: 194px; width: 809px; height: 557px; display: flex; flex-direction: column; border-radius: 0 7px 0 0; overflow: hidden; }
.dlg-title {
  position: relative; height: 43px; flex: none; display: flex; align-items: flex-start;
  background: rgba(40, 80, 140, .25); backdrop-filter: blur(3px);
  border-top: 1px solid #d8d8d8; border-bottom: 1px solid #e4e4e4;
}
.dlg-glow { position: absolute; left: 0; top: 0; bottom: 0; width: 118px; background: linear-gradient(90deg, #bfe0fb 0, #d4e8fa 60%, #b0d0f0 84%, rgba(150, 190, 230, 0)); }
.dlg-name { position: relative; margin: 11px 0 0 -2px; font-size: 18px; color: #111; }
.dlg-ctrls { position: absolute; left: 640px; top: 0; display: flex; height: 28px; }
.wb { display: flex; align-items: center; justify-content: center; height: 28px; border: 1px solid rgba(230, 230, 230, .6); border-top: 0; }
.wb-min { width: 44px; background: linear-gradient(#8a8a8a, #303030 50%, #141414); border-radius: 0 0 0 4px; }
.wb-min i { width: 17px; height: 5px; margin-top: 6px; background: #aaa; }
.wb-max { width: 41px; background: linear-gradient(#8a8a8a, #383838 50%, #1c1c1c); }
.wb-max i { width: 18px; height: 16px; border: 4px solid #d8d8d8; background: #333; }
.wb-close { width: 72px; background: linear-gradient(#d88a78, #c05040 45%, #b02c14); border-radius: 0 0 4px 0; color: #fff; font: 700 20px/1 "DejaVu Sans", sans-serif; }
.dlg-lower { flex: 1; display: flex; min-height: 0; }
.dlg-main { width: 797px; flex: none; background: #f0f0f0; padding-top: 8px; display: flex; flex-direction: column; border-right: 1px solid #666; }
.dlg-bezel {
  flex: 1;
  background: linear-gradient(#8a8a8a 0, #444 12%, #aaa 21%, #c4ead4 25%, #30b060 30%, #30b060 57%, #a8d4ee 60%, #b4d8f6 100%);
}
.dt { width: 792px; height: 468px; background: #fff; border-right: 2px solid #d0d0d0; border-bottom: 2px solid #c8c8c8; flex: none; }
.dt-row { display: grid; grid-template-columns: 7px 601px 179px; height: 28.5px; border-bottom: 2px solid #cdcdcd; }
.dt-head { height: 34px; }
.dc { display: flex; align-items: center; border-right: 2px solid #cdcdcd; white-space: nowrap; overflow: hidden; position: relative; }
.dc-g { background: #f4f4f4; }
.dt-first .dc-g { background: #ffd68c; }
.dt-first .dc-v { background: #deedfc; }
.dc-h { justify-content: center; background: linear-gradient(#fbfbfb, #ececec); padding-top: 4px; }
.dc-vh { justify-content: center; background: linear-gradient(#fcdba0, #f2bb62); color: #7a0a70; padding-top: 4px; }
.dt-head .dc:first-child { background: #f4f4f4; }
.dc-n { background: #ffffe0; padding-left: 5px; gap: 8px; font-size: 17.9px; line-height: 15px; }
.dc-n .grey { padding-top: 9px; }
.dc-n .exp { margin-top: 3px; }
.dc-child { padding: 11px 0 0 45px; overflow: visible; }
.dc-child::before { content: ""; position: absolute; left: 13px; top: -2px; bottom: -2px; width: 2px; background: #c8c8c8; }
.dc-child::after { content: ""; position: absolute; left: 15px; top: 14px; width: 24px; height: 2px; background: #c8c8c8; }
.dc-last::before { bottom: 12px; }
.dc-v { background: #fff; padding: 10px 0 0 3px; font-size: 16.5px; line-height: 15px; }
.dc-wide { font-size: 18px; }
.dlg-info { flex: 1; padding-top: 13px; margin-left: -18px; font-size: 18px; }

.ring {
  position: absolute; left: 1692px; top: 134px; width: 72px; height: 72px; border-radius: 50%;
  background: radial-gradient(circle, #fff 0 15px, rgba(190,190,190,.9) 15.5px 21px, rgba(165,165,165,.9) 21.5px 27px, rgba(138,138,138,.9) 27.5px 36px);
}
.arrows { position: absolute; left: 0; top: 0; width: 1766px; height: 751px; pointer-events: none; }
.arrows path { fill: #ff4040; }
```
